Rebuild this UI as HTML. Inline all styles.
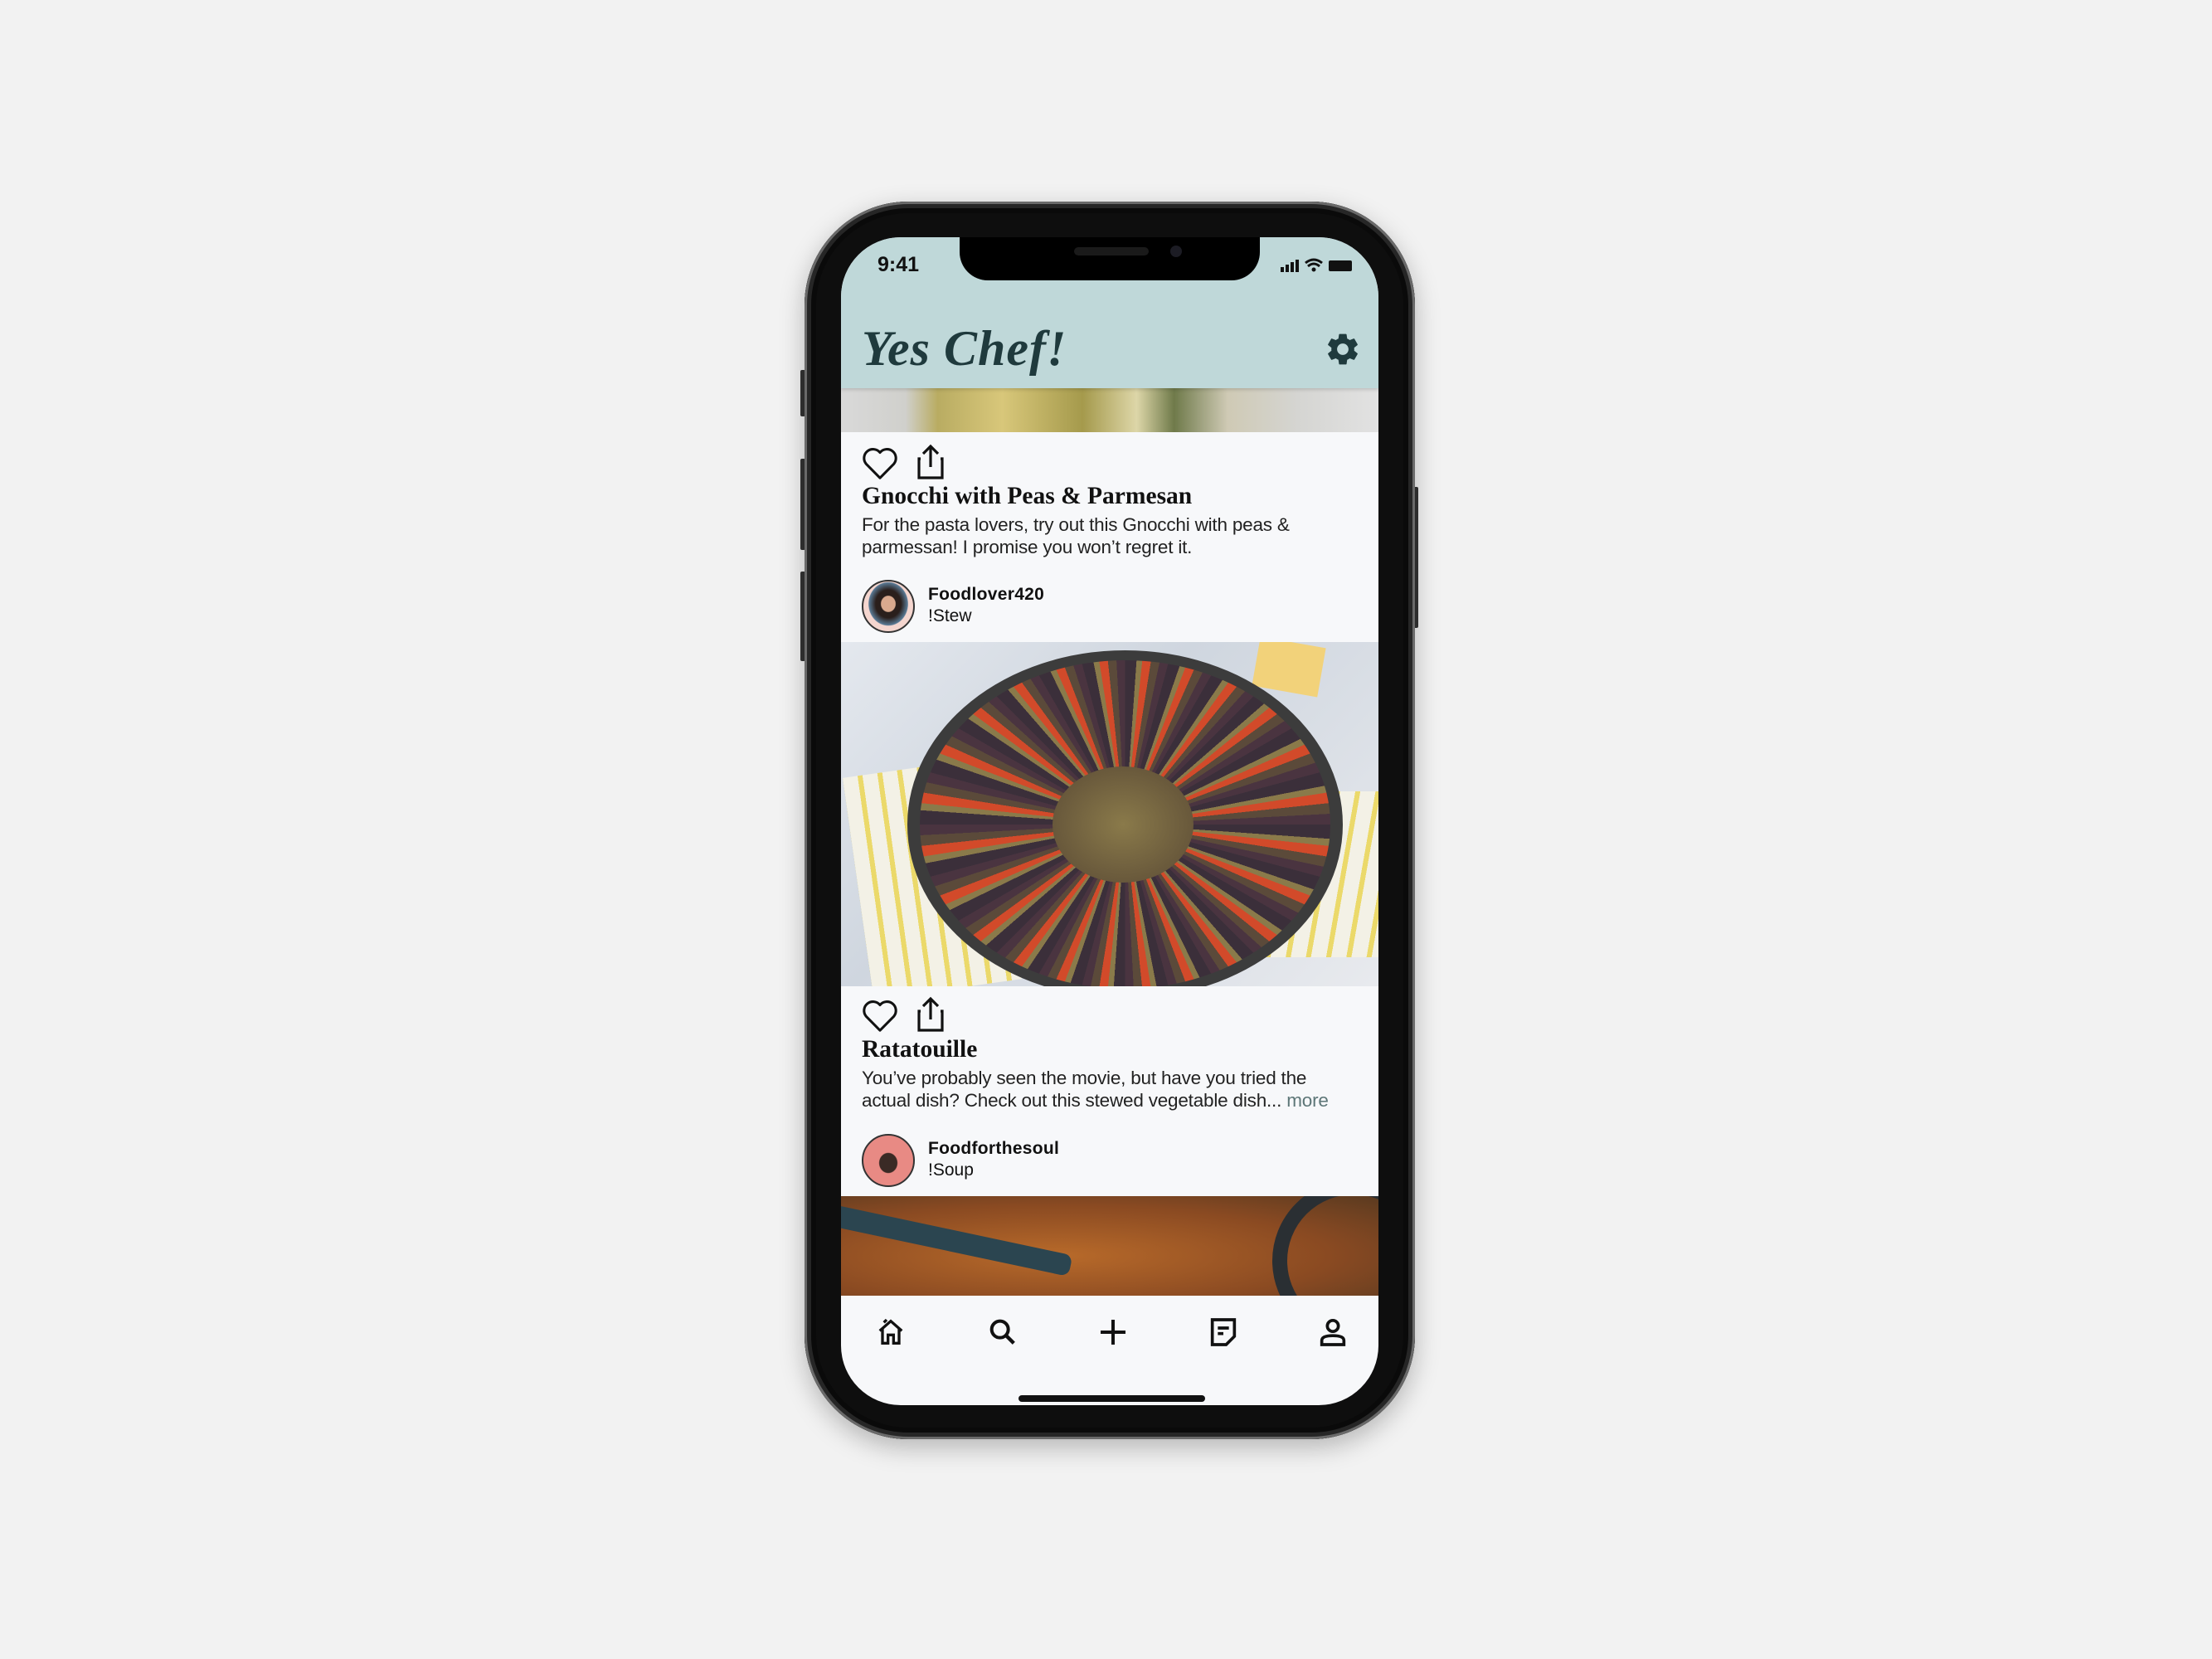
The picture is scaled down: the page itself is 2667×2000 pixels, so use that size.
<!DOCTYPE html>
<html><head><meta charset="utf-8"><style>
html,body{margin:0;padding:0;}
body{width:2667px;height:2000px;background:#f2f2f2;position:relative;overflow:hidden;font-family:"Liberation Sans",sans-serif;}
.abs{position:absolute;}
.phone{left:970px;top:243px;width:736px;height:1492px;border-radius:125px;background:#0e0e0e;box-shadow:0 10px 30px rgba(0,0,0,0.25), inset 0 0 0 3px #6a6a6a, inset 0 0 0 8px #262626, inset 0 0 0 14px #0a0a0a;}
.btn{background:#333;width:6px;border-radius:2px;}
.screen{left:1014px;top:286px;width:648px;height:1408px;border-radius:72px;overflow:hidden;background:#f7f8fa;}
.notch{left:143px;top:0;width:362px;height:52px;background:#000;border-radius:0 0 34px 34px;}
.header{left:0;top:0;width:648px;height:182px;background:#bfd8d9;box-shadow:0 2px 4px rgba(0,0,0,0.15);z-index:2;}
.time{left:44px;top:19px;font-size:25px;font-weight:bold;color:#111;}
.title{left:25px;top:100px;font-family:"Liberation Serif",serif;font-style:italic;font-weight:bold;font-size:60px;color:#1f3a3d;letter-spacing:1px;}
.t2{font-family:"Liberation Serif",serif;font-weight:bold;font-size:29.5px;color:#111;left:25px;}
.desc{left:25px;font-size:22.5px;color:#222;line-height:27px;letter-spacing:-0.2px;}
.user{left:105px;font-size:21px;color:#111;line-height:26px;}
.user b{font-weight:bold;letter-spacing:0.3px;}
.av{width:60px;height:60px;border-radius:50%;border:2px solid #333;left:25px;overflow:hidden;}
</style></head><body>
<div class="abs btn" style="left:965px;top:446px;height:56px"></div>
<div class="abs btn" style="left:965px;top:553px;height:110px"></div>
<div class="abs btn" style="left:965px;top:689px;height:108px"></div>
<div class="abs btn" style="left:1704px;top:587px;height:170px"></div>
<div class="abs phone"></div>
<div class="abs screen">
  <div class="abs header">
    <div class="abs time">9:41</div>
    <svg class="abs" style="left:522px;top:22px" width="100" height="24" viewBox="0 0 100 24">
      <rect x="8" y="14" width="4" height="6" fill="#111"/><rect x="14" y="11" width="4" height="9" fill="#111"/><rect x="20" y="8" width="4" height="12" fill="#111"/><rect x="26" y="5" width="4" height="15" fill="#111"/>
      <path d="M38 9 Q48 1 58 9 M41 13 Q48 7 55 13" stroke="#111" stroke-width="3" fill="none"/><circle cx="48" cy="17" r="2.5" fill="#111"/>
      <rect x="66" y="6" width="28" height="13" rx="2" fill="#111"/>
    </svg>
    <div class="abs title">Yes Chef!</div>
    <svg class="abs" style="left:582px;top:112px" width="46" height="46" viewBox="0 0 24 24"><path fill="#1f3a3d" d="M19.14 12.94c.04-.3.06-.61.06-.94 0-.32-.02-.64-.07-.94l2.030-1.58a.49.49 0 0 0 .12-.61l-1.92-3.32a.49.49 0 0 0-.59-.22l-2.39.96c-.5-.38-1.03-.7-1.62-.94l-.36-2.54a.48.48 0 0 0-.48-.41h-3.84c-.24 0-.43.17-.47.41l-.36 2.54c-.59.24-1.13.57-1.620.94l-2.39-.96a.49.49 0 0 0-.59.22L2.74 8.87c-.12.21-.08.47.12.61l2.03 1.58c-.05.3-.09.63-.09.94s.02.64.07.94l-2.03 1.58a.49.49 0 0 0-.12.61l1.92 3.32c.12.22.37.29.59.22l2.39-.96c.5.38 1.03.7 1.62.94l.36 2.54c.05.24.24.41.48.41h3.84c.24 0 .44-.17.47-.41l.36-2.54c.59-.24 1.13-.56 1.62-.94l2.39.96c.22.08.47 0 .59-.22l1.92-3.32c.12-.22.07-.47-.12-.61l-2.01-1.58zM12 15.6c-1.98 0-3.6-1.62-3.6-3.6s1.62-3.6 3.6-3.6 3.6 1.62 3.6 3.6-1.62 3.6-3.6 3.6z"/></svg>
  </div>
  <div class="abs notch" style="z-index:3"><div class="abs" style="left:138px;top:12px;width:90px;height:10px;border-radius:5px;background:#1a1a1a"></div><div class="abs" style="left:254px;top:10px;width:14px;height:14px;border-radius:50%;background:#1c1c24"></div></div>

  <div class="abs" style="left:0;top:182px;width:648px;height:53px;background:linear-gradient(90deg,#d9d9d9 0%,#d0d0cc 12%,#b9ac62 18%,#d8c77a 30%,#a59a4c 45%,#ddd6a8 55%,#6f7a4a 62%,#cfcab5 72%,#d5d5d2 85%,#e2e2e2 100%);"></div>

  <svg class="abs" style="left:24px;top:251px" width="46" height="42" viewBox="0 0 24 22"><path d="M12 20.5 L3.2 11.6 A5 5 0 0 1 12 4.5 A5 5 0 0 1 20.8 11.6 Z" fill="none" stroke="#111" stroke-width="1.6" stroke-linejoin="round"/></svg>
  <svg class="abs" style="left:88px;top:249px" width="40" height="44" viewBox="0 0 20 22"><path d="M10 14 V2 M5.5 6 L10 1.5 L14.5 6 M4 9 H3 V20.5 H17 V9 H16" fill="none" stroke="#111" stroke-width="1.6"/></svg>
  <div class="abs t2" style="top:296px">Gnocchi with Peas &amp; Parmesan</div>
  <div class="abs desc" style="top:333px">For the pasta lovers, try out this Gnocchi with peas &amp;<br>parmessan! I promise you won’t regret it.</div>
  <div class="abs av" style="top:413px;background:radial-gradient(ellipse at 50% 45%,#d9a98e 0 20%,#2a1f1c 22% 36%,#5a7a95 55%,#f5d6cf 57%);"></div>
  <div class="abs user" style="top:418px"><b>Foodlover420</b><br>!Stew</div>

  <div class="abs" style="left:0;top:488px;width:648px;height:415px;overflow:hidden;background:linear-gradient(135deg,#e4e8ee,#cfd6df 40%,#e8eaee);">
    <div class="abs" style="left:20px;top:150px;width:180px;height:270px;background:repeating-linear-gradient(90deg,#f3f1e6 0 18px,#ebd96a 18px 24px);transform:rotate(-8deg)"></div>
    <div class="abs" style="left:480px;top:180px;width:200px;height:200px;background:repeating-linear-gradient(100deg,#f3f1e6 0 18px,#ebd96a 18px 24px);"></div>
    <div class="abs" style="left:500px;top:0;width:80px;height:60px;background:#f2d27a;transform:rotate(10deg)"></div>
    <div class="abs" style="left:80px;top:10px;width:525px;height:420px;border-radius:50%;background:#3c3c3c;"></div>
    <div class="abs" style="left:95px;top:22px;width:495px;height:396px;border-radius:50%;background:repeating-conic-gradient(from 0deg at 50% 50%,#3b2f3a 0 4deg,#8a7a4a 4deg 6deg,#d24a2a 6deg 9deg,#5b4a3a 9deg 12deg,#4a3440 12deg 15deg);"></div>
    <div class="abs" style="left:255px;top:150px;width:170px;height:140px;border-radius:50%;background:radial-gradient(#8a7a4a,#5a4a35);"></div>
  </div>

  <svg class="abs" style="left:24px;top:917px" width="46" height="42" viewBox="0 0 24 22"><path d="M12 20.5 L3.2 11.6 A5 5 0 0 1 12 4.5 A5 5 0 0 1 20.8 11.6 Z" fill="none" stroke="#111" stroke-width="1.6" stroke-linejoin="round"/></svg>
  <svg class="abs" style="left:88px;top:915px" width="40" height="44" viewBox="0 0 20 22"><path d="M10 14 V2 M5.5 6 L10 1.5 L14.5 6 M4 9 H3 V20.5 H17 V9 H16" fill="none" stroke="#111" stroke-width="1.6"/></svg>
  <div class="abs t2" style="top:963px">Ratatouille</div>
  <div class="abs desc" style="top:1000px">You’ve probably seen the movie, but have you tried the<br>actual dish? Check out this stewed vegetable dish... <span style="color:#5d7677">more</span></div>
  <div class="abs av" style="top:1081px;background:radial-gradient(ellipse at 50% 55%,#3a2a25 0 25%,#e88a84 27%);"></div>
  <div class="abs user" style="top:1086px"><b>Foodforthesoul</b><br>!Soup</div>

  <div class="abs" style="left:0;top:1156px;width:648px;height:120px;overflow:hidden;background:radial-gradient(ellipse at 40% 60%,#b86a2a,#8a4a22 60%,#5a3a20);">
    <div class="abs" style="left:-20px;top:40px;width:300px;height:26px;background:#2b4550;transform:rotate(12deg);border-radius:10px"></div>
    <div class="abs" style="left:520px;top:-20px;width:160px;height:160px;border-radius:50%;border:18px solid #2a2f33;"></div>
  </div>

  <svg class="abs" style="left:40px;top:1300px" width="40" height="40" viewBox="0 0 24 24"><path d="M4 11 L12 4 L20 11 M6 9.5 V20 H10 V14 H14 V20 H18 V9.5 M7 5 L9 3" fill="none" stroke="#111" stroke-width="2"/></svg>
  <svg class="abs" style="left:175px;top:1300px" width="40" height="40" viewBox="0 0 24 24"><circle cx="10" cy="10" r="6" fill="none" stroke="#111" stroke-width="2.4"/><path d="M14.5 14.5 L20 20" stroke="#111" stroke-width="2.6"/></svg>
  <svg class="abs" style="left:308px;top:1300px" width="40" height="40" viewBox="0 0 24 24"><path d="M12 3 V21 M3 12 H21" stroke="#111" stroke-width="2.4"/></svg>
  <svg class="abs" style="left:441px;top:1300px" width="40" height="40" viewBox="0 0 24 24"><path d="M4 3 H20 V15 L14 21 H4 Z M8 9 H16 M8 13 H12" fill="none" stroke="#111" stroke-width="2.2"/></svg>
  <svg class="abs" style="left:573px;top:1300px" width="40" height="40" viewBox="0 0 24 24"><circle cx="12" cy="7.5" r="4" fill="none" stroke="#111" stroke-width="2.2"/><path d="M4 21 V18 Q4 14.5 12 14.5 Q20 14.5 20 18 V21 Z" fill="none" stroke="#111" stroke-width="2.2"/></svg>
  <div class="abs" style="left:214px;top:1396px;width:225px;height:8px;border-radius:4px;background:#111"></div>
</div>
</body></html>
